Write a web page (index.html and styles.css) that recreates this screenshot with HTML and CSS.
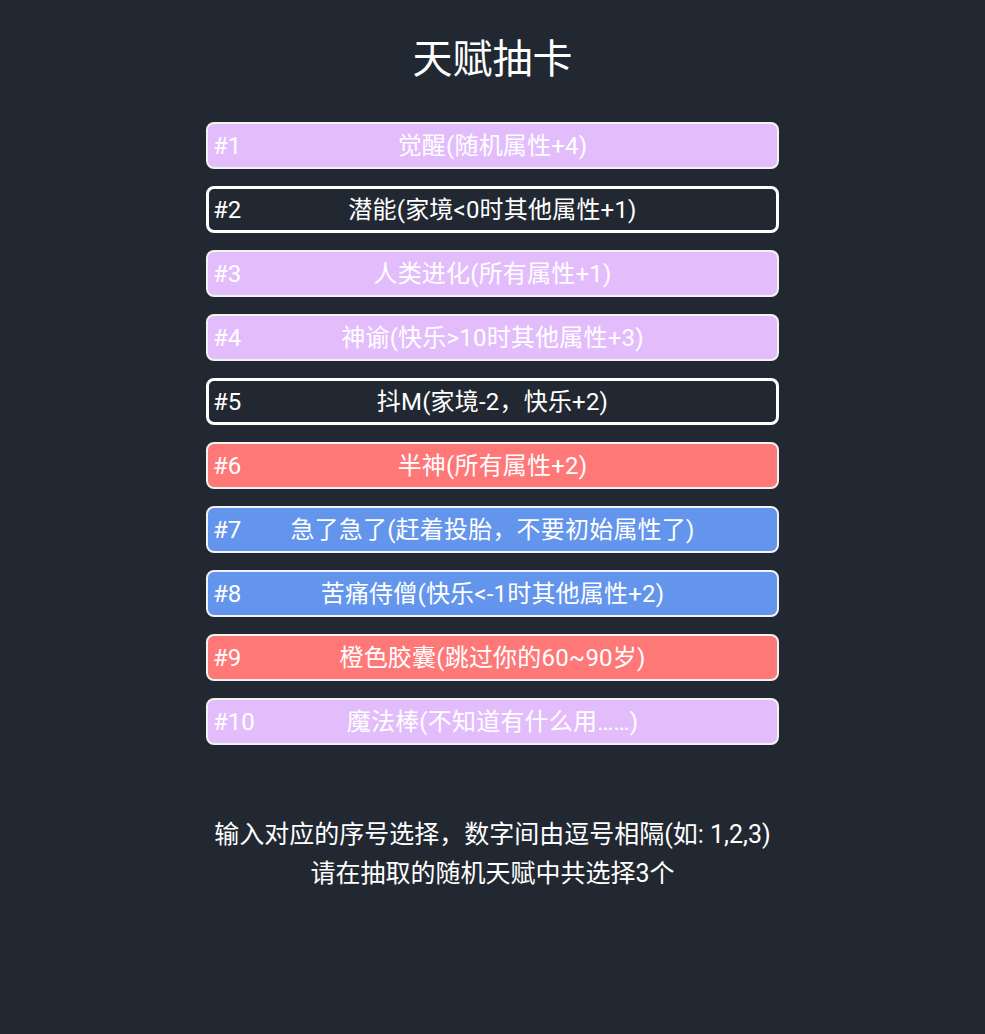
FILE: index.html
```html
<!DOCTYPE html>
<html lang="zh-CN">
<head>
<meta charset="utf-8">
<title>天赋抽卡</title>
<link rel="stylesheet" href="styles.css">
</head>
<body>
<main class="page">
  <h1 class="title">天赋抽卡</h1>
  <ul class="talents">
    <li class="talent grade2 selected"><span class="num">#1</span><span class="desc">觉醒(随机属性+4)</span></li>
    <li class="talent plain"><span class="num">#2</span><span class="desc">潜能(家境&lt;0时其他属性+1)</span></li>
    <li class="talent grade2 selected"><span class="num">#3</span><span class="desc">人类进化(所有属性+1)</span></li>
    <li class="talent grade2 selected"><span class="num">#4</span><span class="desc">神谕(快乐&gt;10时其他属性+3)</span></li>
    <li class="talent plain"><span class="num">#5</span><span class="desc">抖M(家境-2，快乐+2)</span></li>
    <li class="talent grade3 selected"><span class="num">#6</span><span class="desc">半神(所有属性+2)</span></li>
    <li class="talent grade1 selected"><span class="num">#7</span><span class="desc">急了急了(赶着投胎，不要初始属性了)</span></li>
    <li class="talent grade1 selected"><span class="num">#8</span><span class="desc">苦痛侍僧(快乐&lt;-1时其他属性+2)</span></li>
    <li class="talent grade3 selected"><span class="num">#9</span><span class="desc">橙色胶囊(跳过你的60~90岁)</span></li>
    <li class="talent grade2 selected"><span class="num">#10</span><span class="desc">魔法棒(不知道有什么用……)</span></li>
  </ul>
  <div class="hint">
    <p>输入对应的序号选择，数字间由逗号相隔(如: 1,2,3)</p>
    <p>请在抽取的随机天赋中共选择3个</p>
  </div>
</main>
</body>
</html>
```
FILE: styles.css
```css
html, body {
  margin: 0;
  padding: 0;
}
body {
  background: #222831;
  color: #ffffff;
  font-family: Roboto, "Noto Sans CJK SC", sans-serif;
}
.page {
  display: flex;
  flex-direction: column;
  align-items: center;
  padding-top: 36px;
}
.title {
  margin: 0;
  font-size: 40px;
  font-weight: 400;
  line-height: 48px;
}
.talents {
  list-style: none;
  margin: 38px 0 0 0;
  padding: 0;
  width: 573px;
  display: flex;
  flex-direction: column;
  gap: 17px;
}
.talent {
  box-sizing: border-box;
  height: 47px;
  border-radius: 8px;
  display: grid;
  grid-template-columns: 1fr auto 1fr;
  align-items: center;
  font-size: 24px;
  line-height: 30px;
  white-space: nowrap;
}
.talent.selected {
  border: 2px solid #f2f2f2;
}
.talent.selected .num {
  padding-left: 5px;
}
.talent.plain {
  border: 3px solid #ffffff;
  background: #222831;
}
.talent.plain .num {
  padding-left: 4px;
}
.num {
  grid-column: 1;
  font-size: 24px;
}
.desc {
  grid-column: 2;
  letter-spacing: 0.2px;
}
.grade1 { background: #6495ed; }
.grade2 { background: #e3bdfb; }
.grade3 { background: #ff7878; }
.hint {
  margin-top: 70px;
  text-align: center;
  font-size: 25px;
  line-height: 39px;
}
.hint p {
  margin: 0;
}
```
